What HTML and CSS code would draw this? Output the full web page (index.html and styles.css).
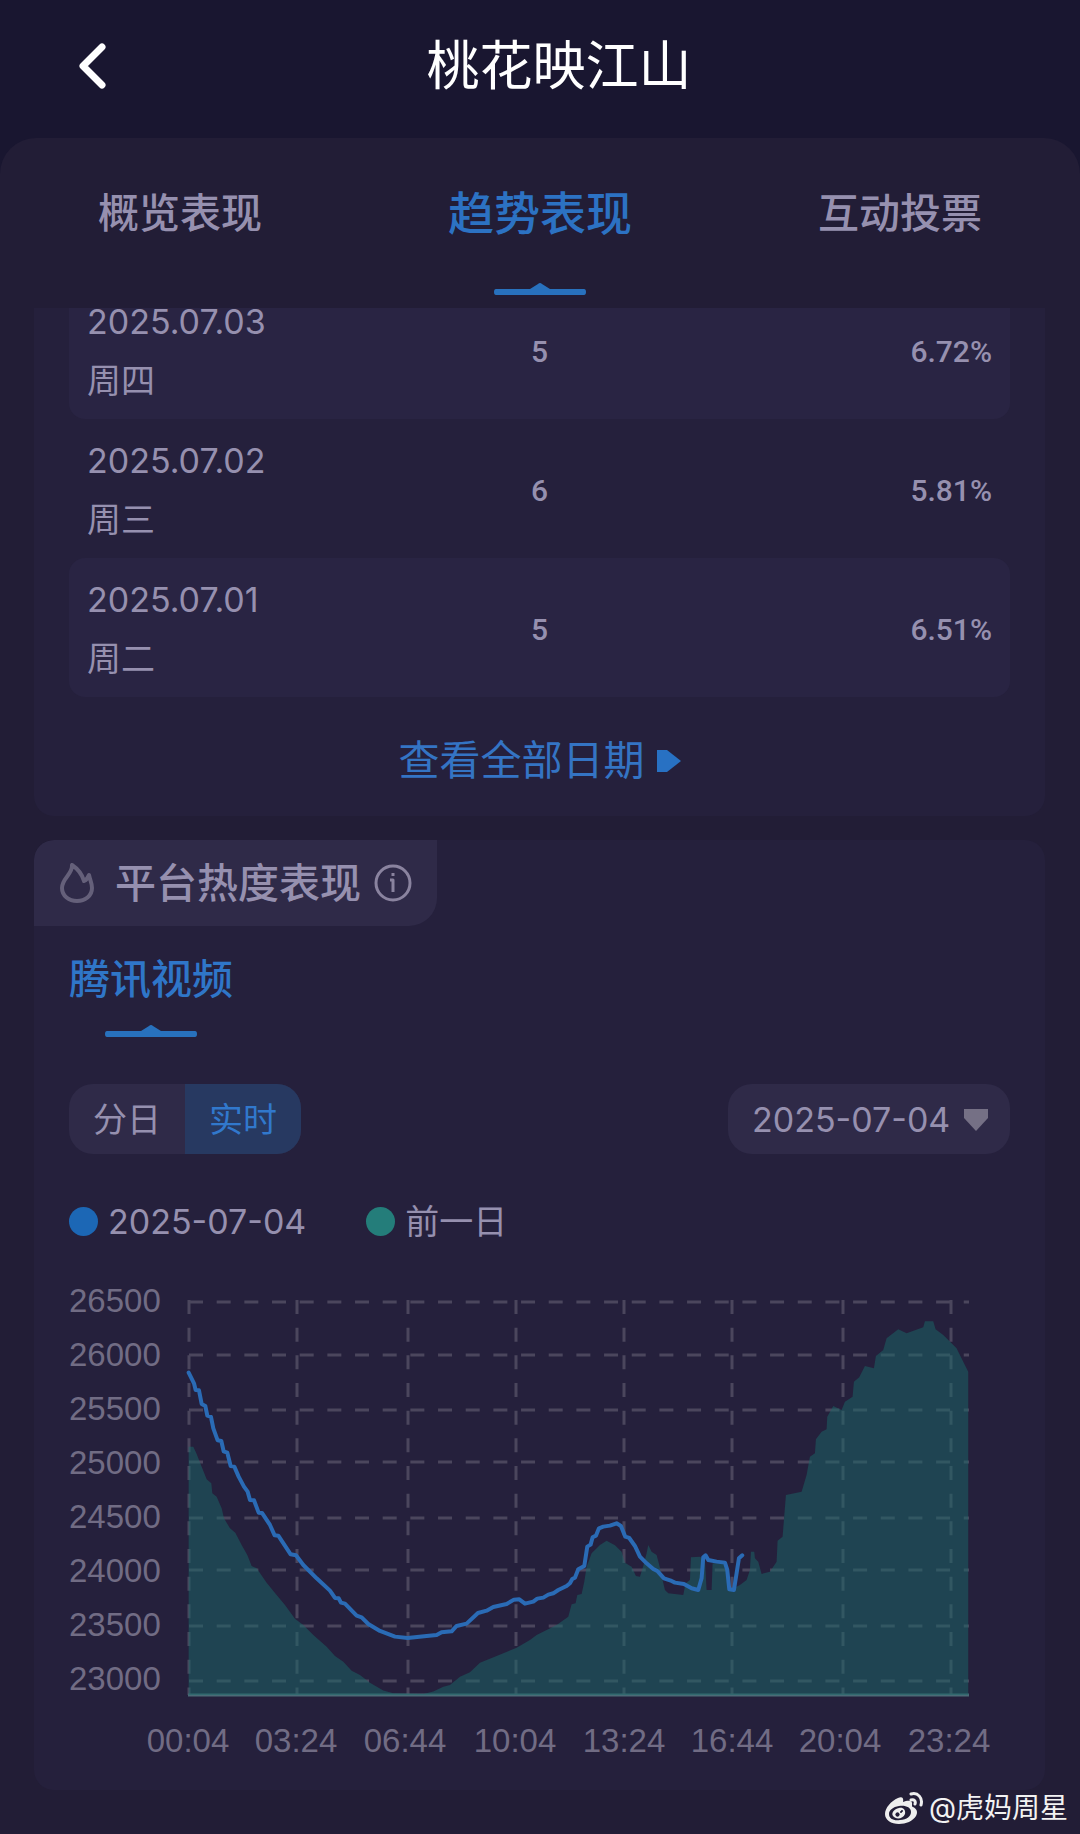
FILE: index.html
```html
<!DOCTYPE html>
<html lang="zh-CN">
<head>
    <meta charset="UTF-8">
    <meta name="viewport" content="width=device-width, initial-scale=1.0">
    <title>桃花映江山</title>
    <link rel="stylesheet" href="styles.css">
</head>
<body>
    <header class="encabezado">
        <button type="button" class="volver" aria-label="返回">
            <svg width="28" height="46" viewBox="0 0 28 46"><path d="M24 4 L5 23 L24 42"/></svg>
        </button>
        <h1>桃花映江山</h1>
    </header>
    <main>
        <nav class="pestanas">
            <button type="button">概览表现</button>
            <button type="button" class="activa">趋势表现
                <svg class="marca" width="92" height="12" viewBox="0 0 92 12"><path d="M2 6 H36 L44 1 Q46 -1 48 1 L56 6 H90 Q92 6 92 9 Q92 12 90 12 H2 Q0 12 0 9 Q0 6 2 6Z"/></svg>
            </button>
            <button type="button">互动投票</button>
        </nav>

        <!-- Tabla de fechas -->
        <section class="tarjeta fechas">
            <table>
                <tbody>
                    <tr>
                        <td>2025.07.03<br>周四</td>
                        <td class="numero">5</td>
                        <td class="numero">6.72%</td>
                    </tr>
                    <tr>
                        <td>2025.07.02<br>周三</td>
                        <td class="numero">6</td>
                        <td class="numero">5.81%</td>
                    </tr>
                    <tr>
                        <td>2025.07.01<br>周二</td>
                        <td class="numero">5</td>
                        <td class="numero">6.51%</td>
                    </tr>
                </tbody>
            </table>
            <a href="#" class="ver_todo">查看全部日期
                <svg width="24" height="22" viewBox="0 0 24 22"><path d="M0 0 H10 L24 11 L10 22 H0Z"/></svg>
            </a>
        </section>

        <!-- Popularidad en la plataforma -->
        <section class="tarjeta">
            <div class="etiqueta">
                <svg class="llama" width="34" height="40" viewBox="0 0 34 40"><path d="M12 2 C13 11 2 15 2 25 C2 33 9 38 17 38 C25 38 32 33 32 25 C32 20 30 17 29 12 C28 15 26 17 24 18 C22 11 18 6 12 2Z"/></svg>
                <h2>平台热度表现</h2>
                <svg class="info" width="38" height="38" viewBox="0 0 38 38"><circle cx="19" cy="19" r="17"/><path d="M19 9 V12 M16 16 H19 V28"/></svg>
            </div>
            <div class="contenido">
                <button type="button" class="plataforma">腾讯视频
                    <svg class="marca" width="92" height="12" viewBox="0 0 92 12"><path d="M2 6 H36 L44 1 Q46 -1 48 1 L56 6 H90 Q92 6 92 9 Q92 12 90 12 H2 Q0 12 0 9 Q0 6 2 6Z"/></svg>
                </button>
                <div class="controles">
                    <div class="modo">
                        <button type="button">分日</button>
                        <button type="button" class="elegido">实时</button>
                    </div>
                    <div class="selector">
                        <select aria-label="日期">
                            <option>2025-07-04</option>
                        </select>
                        <svg width="24" height="22" viewBox="0 0 24 22"><path d="M0 0 H24 V9 L12 22 L0 9Z"/></svg>
                    </div>
                </div>
                <div class="leyenda">
                    <span class="azul">2025-07-04</span>
                    <span class="verde">前一日</span>
                </div>

                <svg class="grafica" viewBox="0 0 941 490" role="img" aria-label="平台热度">
                    <path class="rejilla" d="M120 22H900 M120 75H900 M120 130H900 M120 182H900 M120 238H900 M120 290H900 M120 346H900 M120 401H900"/>
                    <path class="rejilla" d="M120 20V415 M228 20V415 M339 20V415 M447 20V415 M555 20V415 M663 20V415 M774 20V415 M882 20V415"/>
                    <path class="base" d="M119 415H900"/>
                    <g transform="translate(-19 -10) scale(.3333)">
                        <polygon class="area" points="416,1275 416,530 430,530 440,552 455,590 470,628 484,640 487,670 500,680 515,715 522,745 540,775 556,788 575,825 592,855 605,888 620,895 650,938 680,975 705,1005 735,1046 760,1065 790,1095 830,1130 855,1158 880,1175 905,1202 930,1215 960,1238 1000,1262 1030,1270 1120,1272 1150,1265 1180,1250 1200,1245 1230,1220 1260,1207 1290,1178 1340,1158 1400,1133 1440,1110 1460,1095 1490,1080 1520,1065 1555,1040 1565,1003 1577,1000 1582,975 1595,972 1603,935 1610,890 1625,850 1650,825 1670,812 1695,826 1715,845 1725,878 1745,890 1758,918 1770,920 1780,888 1790,850 1795,825 1805,845 1820,855 1828,885 1838,930 1845,960 1855,970 1900,975 1907,940 1920,930 1923,862 1950,860 1965,870 1970,960 1985,960 1988,880 2030,880 2040,960 2070,945 2090,930 2100,900 2103,845 2113,845 2115,865 2125,875 2135,912 2160,905 2180,875 2183,812 2198,800 2208,675 2255,665 2270,615 2280,560 2295,550 2298,508 2315,485 2330,478 2332,440 2350,408 2375,420 2385,395 2408,380 2412,335 2428,322 2445,288 2472,295 2478,258 2500,240 2510,205 2545,178 2570,190 2620,172 2625,154 2650,154 2657,178 2680,195 2720,235 2740,275 2755,305 2755,1275"/>
                        <polyline class="linea" points="416,308 432,340 437,360 447,361 455,402 466,408 472,437 483,441 490,475 503,511 514,513 521,544 532,548 542,588 553,590 566,620 582,650 593,665 600,690 612,691 626,728 636,729 660,765 674,796 685,797 722,853 738,856 760,885 800,925 840,962 855,984 866,985 873,998 885,1001 920,1037 935,1042 955,1062 990,1083 1035,1100 1073,1104 1130,1098 1160,1095 1175,1087 1205,1084 1220,1068 1250,1061 1284,1029 1310,1022 1330,1011 1370,1002 1392,989 1408,988 1425,1001 1450,995 1462,986 1480,983 1495,974 1510,970 1525,960 1550,948 1560,940 1567,927 1575,923 1585,898 1603,888 1612,830 1622,824 1628,802 1638,797 1647,775 1660,770 1680,767 1700,760 1713,768 1726,800 1738,804 1755,828 1770,860 1790,880 1810,897 1822,903 1842,925 1865,933 1875,938 1902,942 1925,955 1945,960 1955,925 1960,862 1967,856 1975,870 2000,875 2025,878 2032,900 2038,958 2052,960 2060,910 2067,865 2077,856"/>
                    </g>
                    <g class="eje_y">
                        <text x="0" y="32">26500</text>
                        <text x="0" y="86">26000</text>
                        <text x="0" y="140">25500</text>
                        <text x="0" y="194">25000</text>
                        <text x="0" y="248">24500</text>
                        <text x="0" y="302">24000</text>
                        <text x="0" y="356">23500</text>
                        <text x="0" y="410">23000</text>
                    </g>
                    <g class="eje_x">
                        <text x="119" y="472">00:04</text>
                        <text x="227" y="472">03:24</text>
                        <text x="336" y="472">06:44</text>
                        <text x="446" y="472">10:04</text>
                        <text x="555" y="472">13:24</text>
                        <text x="663" y="472">16:44</text>
                        <text x="771" y="472">20:04</text>
                        <text x="880" y="472">23:24</text>
                    </g>
                </svg>
            </div>
        </section>
    </main>
    <footer class="pie_pagina">
        <svg width="38" height="32" viewBox="0 0 38 32">
            <path fill="#eee" fill-rule="evenodd" d="M13 6 C17 4 19 6 18 10 C23 8 28 8 27 13 C27 14 27 15 28 15 C32 17 33 20 31 24 C28 29 21 32 14 32 C6 32 0 28 0 22 C0 16 6 9 13 6Z M14 14 C8 15 4 18 4 22 C4 27 9 29 15 28 C22 28 26 24 26 20 C26 15 20 13 14 14Z"/>
            <path fill="#eee" fill-rule="evenodd" d="M14 16 C18 15 21 18 20 22 C18 27 11 28 8 24 C6 21 9 17 14 16Z M11 21 A2 2 0 1 0 14 24 A2 2 0 1 0 11 21Z M16 19 A1 1 0 1 0 17 20 A1 1 0 1 0 16 19Z"/>
            <path fill="none" stroke="#eee" stroke-width="3" stroke-linecap="round" d="M26 2 C33 0 38 6 36 13 M26 8 C29 7 31 9 30 12"/>
        </svg>
        <span>@虎妈周星</span>
    </footer>
</body>
</html>
```

FILE: styles.css
```css
*{
    box-sizing: border-box;
}
body{
    margin: 0;
    background-color: #191630;
    color: #9690af;
    font-family: Inter, "Noto Sans CJK SC", sans-serif;
    font-size: 34px;
    line-height: 59px;
}
button, select{
    margin: 0;
    padding: 0;
    border: none;
    background: none;
    color: inherit;
    font: inherit;
}
h1, h2{
    margin: 0;
    font-weight: 400;
}
svg{
    display: block;
    flex-shrink: 0;
}
.encabezado{
    display: flex;
    align-items: center;
    height: 138px;
    padding: 0 68px 6px 78px;
}
.encabezado h1{
    flex: 1;
    color: #fff;
    font-size: 53px;
    text-align: center;
}
.volver path{
    fill: none;
    stroke: #fff;
    stroke-width: 7;
    stroke-linecap: round;
    stroke-linejoin: round;
}
main{
    background-color: #221d36;
    border-radius: 36px 36px 0 0;
}
/* pestañas de arriba */
.pestanas{
    display: flex;
    justify-content: space-between;
    align-items: flex-start;
    height: 170px;
    padding: 6px 98px 0;
}
.pestanas button{
    font-size: 41px;
    font-weight: 500;
    line-height: 139px;
}
.pestanas .activa{
    color: #2c72c3;
    font-size: 46px;
}
.marca{
    margin: 0 auto;
    fill: #2871bd;
}
.tarjeta{
    margin: 0 35px 24px 34px;
    background-color: #25203c;
    border-radius: 20px;
    overflow: hidden;
}
.fechas{
    padding: 0 35px;
    border-radius: 0 0 20px 20px;
}
.fechas table{
    width: 100%;
    margin-top: -28px;
    border-spacing: 0;
    table-layout: fixed;
}
.fechas td{
    padding: 12px 18px 9px;
}
.fechas tr:nth-child(odd) td{
    background-color: #292443;
}
.fechas td:first-child{
    border-radius: 16px 0 0 16px;
}
.fechas td:last-child{
    border-radius: 0 16px 16px 0;
}
.fechas .numero{
    font-family: Roboto, sans-serif;
    font-size: 30px;
    font-weight: 500;
    text-align: center;
}
.fechas .numero:last-child{
    text-align: right;
}
.ver_todo{
    display: flex;
    justify-content: center;
    align-items: center;
    gap: 12px;
    padding: 34px 0 26px;
    color: #3474c4;
    font-size: 41px;
    text-decoration: none;
}
.ver_todo svg{
    fill: #2871c3;
}
.etiqueta{
    display: flex;
    align-items: center;
    width: max-content;
    height: 86px;
    padding: 0 25px 0 26px;
    background-color: #2f2a48;
    border-radius: 20px 0 28px 0;
}
.etiqueta h2{
    margin: 0 13px 0 21px;
    font-size: 41px;
    font-weight: 500;
}
.llama, .info{
    fill: none;
    stroke: #65607a;
    stroke-width: 4;
    stroke-linejoin: round;
}
.info{
    stroke: #8a839f;
    stroke-width: 3;
}
.contenido{
    padding: 24px 35px 20px;
}
.plataforma{
    color: #2f76c8;
    font-size: 41px;
    font-weight: 500;
}
.plataforma .marca{
    margin-top: 16px;
}
.controles{
    display: flex;
    justify-content: space-between;
    margin-top: 47px;
}
.modo{
    display: flex;
    overflow: hidden;
    background-color: #2f2a48;
    border-radius: 24px;
}
.modo button{
    width: 116px;
    height: 70px;
}
.modo .elegido{
    background-color: #273961;
    color: #3178cc;
}
.selector{
    position: relative;
}
.selector select{
    width: 282px;
    height: 70px;
    padding: 0 24px;
    appearance: none;
    background-color: #2f2a48;
    border-radius: 24px;
}
.selector svg{
    position: absolute;
    top: 25px;
    right: 22px;
    fill: #757085;
    pointer-events: none;
}
.leyenda{
    display: flex;
    gap: 60px;
    margin: 38px 0 29px;
}
.leyenda span{
    display: flex;
    align-items: center;
    gap: 10px;
}
.leyenda span::before{
    content: "";
    width: 29px;
    height: 29px;
    border-radius: 50%;
}
.leyenda .azul::before{
    background-color: #1c67b5;
}
.leyenda .verde::before{
    background-color: #247d7a;
}
/* gráfica */
.grafica{
    width: 100%;
    height: auto;
    overflow: visible;
}
.rejilla{
    fill: none;
    stroke: #4b465d;
    stroke-width: 3;
    stroke-dasharray: 14 13.67;
}
.base{
    stroke: #4b6a76;
    stroke-width: 3;
}
.area{
    fill: #1a6868;
    fill-opacity: .5;
}
.linea{
    fill: none;
    stroke: #2a6bb5;
    stroke-width: 12;
    stroke-linejoin: round;
    stroke-linecap: round;
}
.eje_y, .eje_x{
    fill: #716c84;
    font-family: "Liberation Sans", sans-serif;
    font-size: 33px;
}
.eje_x{
    text-anchor: middle;
}
.pie_pagina{
    display: flex;
    justify-content: flex-end;
    align-items: center;
    gap: 6px;
    height: 44px;
    padding: 0 12px 8px 0;
    background-color: #221d36;
    color: #f2f2f2;
    font-size: 28px;
}
main .tarjeta:last-child{
    margin-bottom: 0;
}
```
